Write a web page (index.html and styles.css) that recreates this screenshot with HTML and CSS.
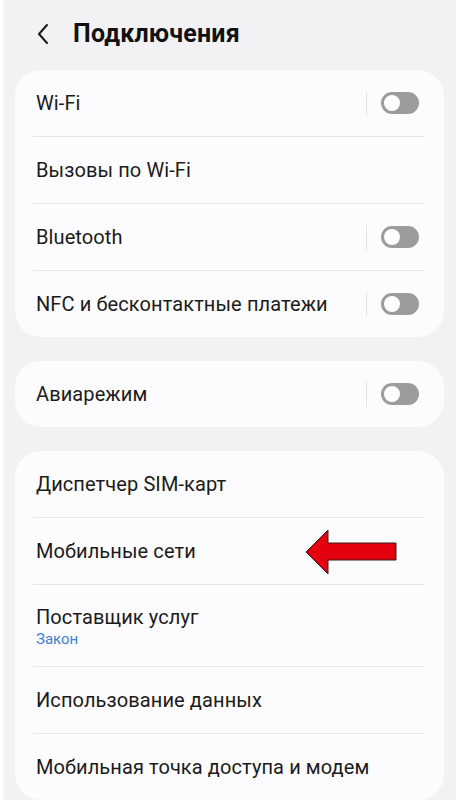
FILE: index.html
```html
<!DOCTYPE html>
<html lang="ru">
<head>
<meta charset="utf-8">
<link rel="stylesheet" href="styles.css">
</head>
<body>
<div class="screen">
  <header class="header">
    <svg class="back" width="14" height="22" viewBox="0 0 14 22"><path d="M11 2 L3 11 L11 20" fill="none" stroke="#1a1a1a" stroke-width="2" stroke-linecap="round" stroke-linejoin="round"/></svg>
    <h1 class="title">Подключения</h1>
  </header>

  <section class="card">
    <div class="row"><span class="label">Wi-Fi</span><span class="sep"></span><span class="toggle"></span></div>
    <div class="divider"></div>
    <div class="row"><span class="label">Вызовы по Wi-Fi</span></div>
    <div class="divider"></div>
    <div class="row"><span class="label">Bluetooth</span><span class="sep"></span><span class="toggle"></span></div>
    <div class="divider"></div>
    <div class="row"><span class="label">NFC и бесконтактные платежи</span><span class="sep"></span><span class="toggle"></span></div>
  </section>

  <section class="card">
    <div class="row"><span class="label">Авиарежим</span><span class="sep"></span><span class="toggle"></span></div>
  </section>

  <section class="card card-last">
    <div class="row"><span class="label">Диспетчер SIM-карт</span></div>
    <div class="divider"></div>
    <div class="row row-arrow"><span class="label">Мобильные сети</span>
      <svg class="arrow" width="96" height="50" viewBox="0 0 96 50"><path d="M2 25 L24 3 L24 16 L92 16 L92 33 L24 33 L24 47 Z" fill="#e3000f" stroke="#3a1a1a" stroke-width="1"/></svg>
    </div>
    <div class="divider"></div>
    <div class="row row-tall"><div class="stack"><span class="label">Поставщик услуг</span><span class="sub">Закон</span></div></div>
    <div class="divider"></div>
    <div class="row"><span class="label">Использование данных</span></div>
    <div class="divider"></div>
    <div class="row"><span class="label">Мобильная точка доступа и модем</span></div>
  </section>
</div>
</body>
</html>
```
FILE: styles.css
```css
html, body {
  margin: 0;
  padding: 0;
  background: #ffffff;
}
body {
  font-family: Roboto, "Noto Sans", "Liberation Sans", sans-serif;
  color: #1b1b1b;
}
.screen {
  margin: 0 4px 0 3px;
  height: 800px;
  overflow: hidden;
  background: #f2f2f4;
  padding: 0 12px;
  box-sizing: border-box;
}
.header {
  height: 70px;
  display: flex;
  align-items: center;
  padding-left: 21px;
  box-sizing: border-box;
  padding-bottom: 3px;
}
.back {
  display: block;
}
.title {
  margin: 0 0 0 23px;
  font-size: 25px;
  font-weight: 700;
  letter-spacing: 0.2px;
  color: #111;
}
.card {
  background: #fcfcfe;
  border-radius: 26px;
  margin-bottom: 24px;
}
.card-last {
  margin-bottom: 0;
}
.row {
  height: 66px;
  display: flex;
  align-items: center;
  padding: 0 25px 0 21px;
  position: relative;
}
.row-tall {
  height: 81px;
}
.label {
  flex: 1;
  font-size: 20px;
  line-height: 24px;
  letter-spacing: 0.1px;
}
.stack {
  display: flex;
  flex-direction: column;
  padding-top: 2px;
}
.stack .label {
  flex: none;
}
.sub {
  font-size: 15px;
  color: #3d7fe0;
  margin-top: 1px;
}
.sep {
  width: 1px;
  height: 25px;
  background: #e4e4e6;
  margin-right: 14px;
}
.toggle {
  width: 38px;
  height: 22px;
  border-radius: 11px;
  background: #9c9c9e;
  position: relative;
}
.toggle::before {
  content: "";
  position: absolute;
  left: 1px;
  top: 1px;
  width: 16px;
  height: 16px;
  border-radius: 50%;
  background: #fff;
  border: 2px solid #9c9c9e;
}
.divider {
  height: 1px;
  background: #e6e6e8;
  margin: 0 19px 0 18px;
}
.arrow {
  position: absolute;
  left: 289px;
  top: 9px;
}
```
